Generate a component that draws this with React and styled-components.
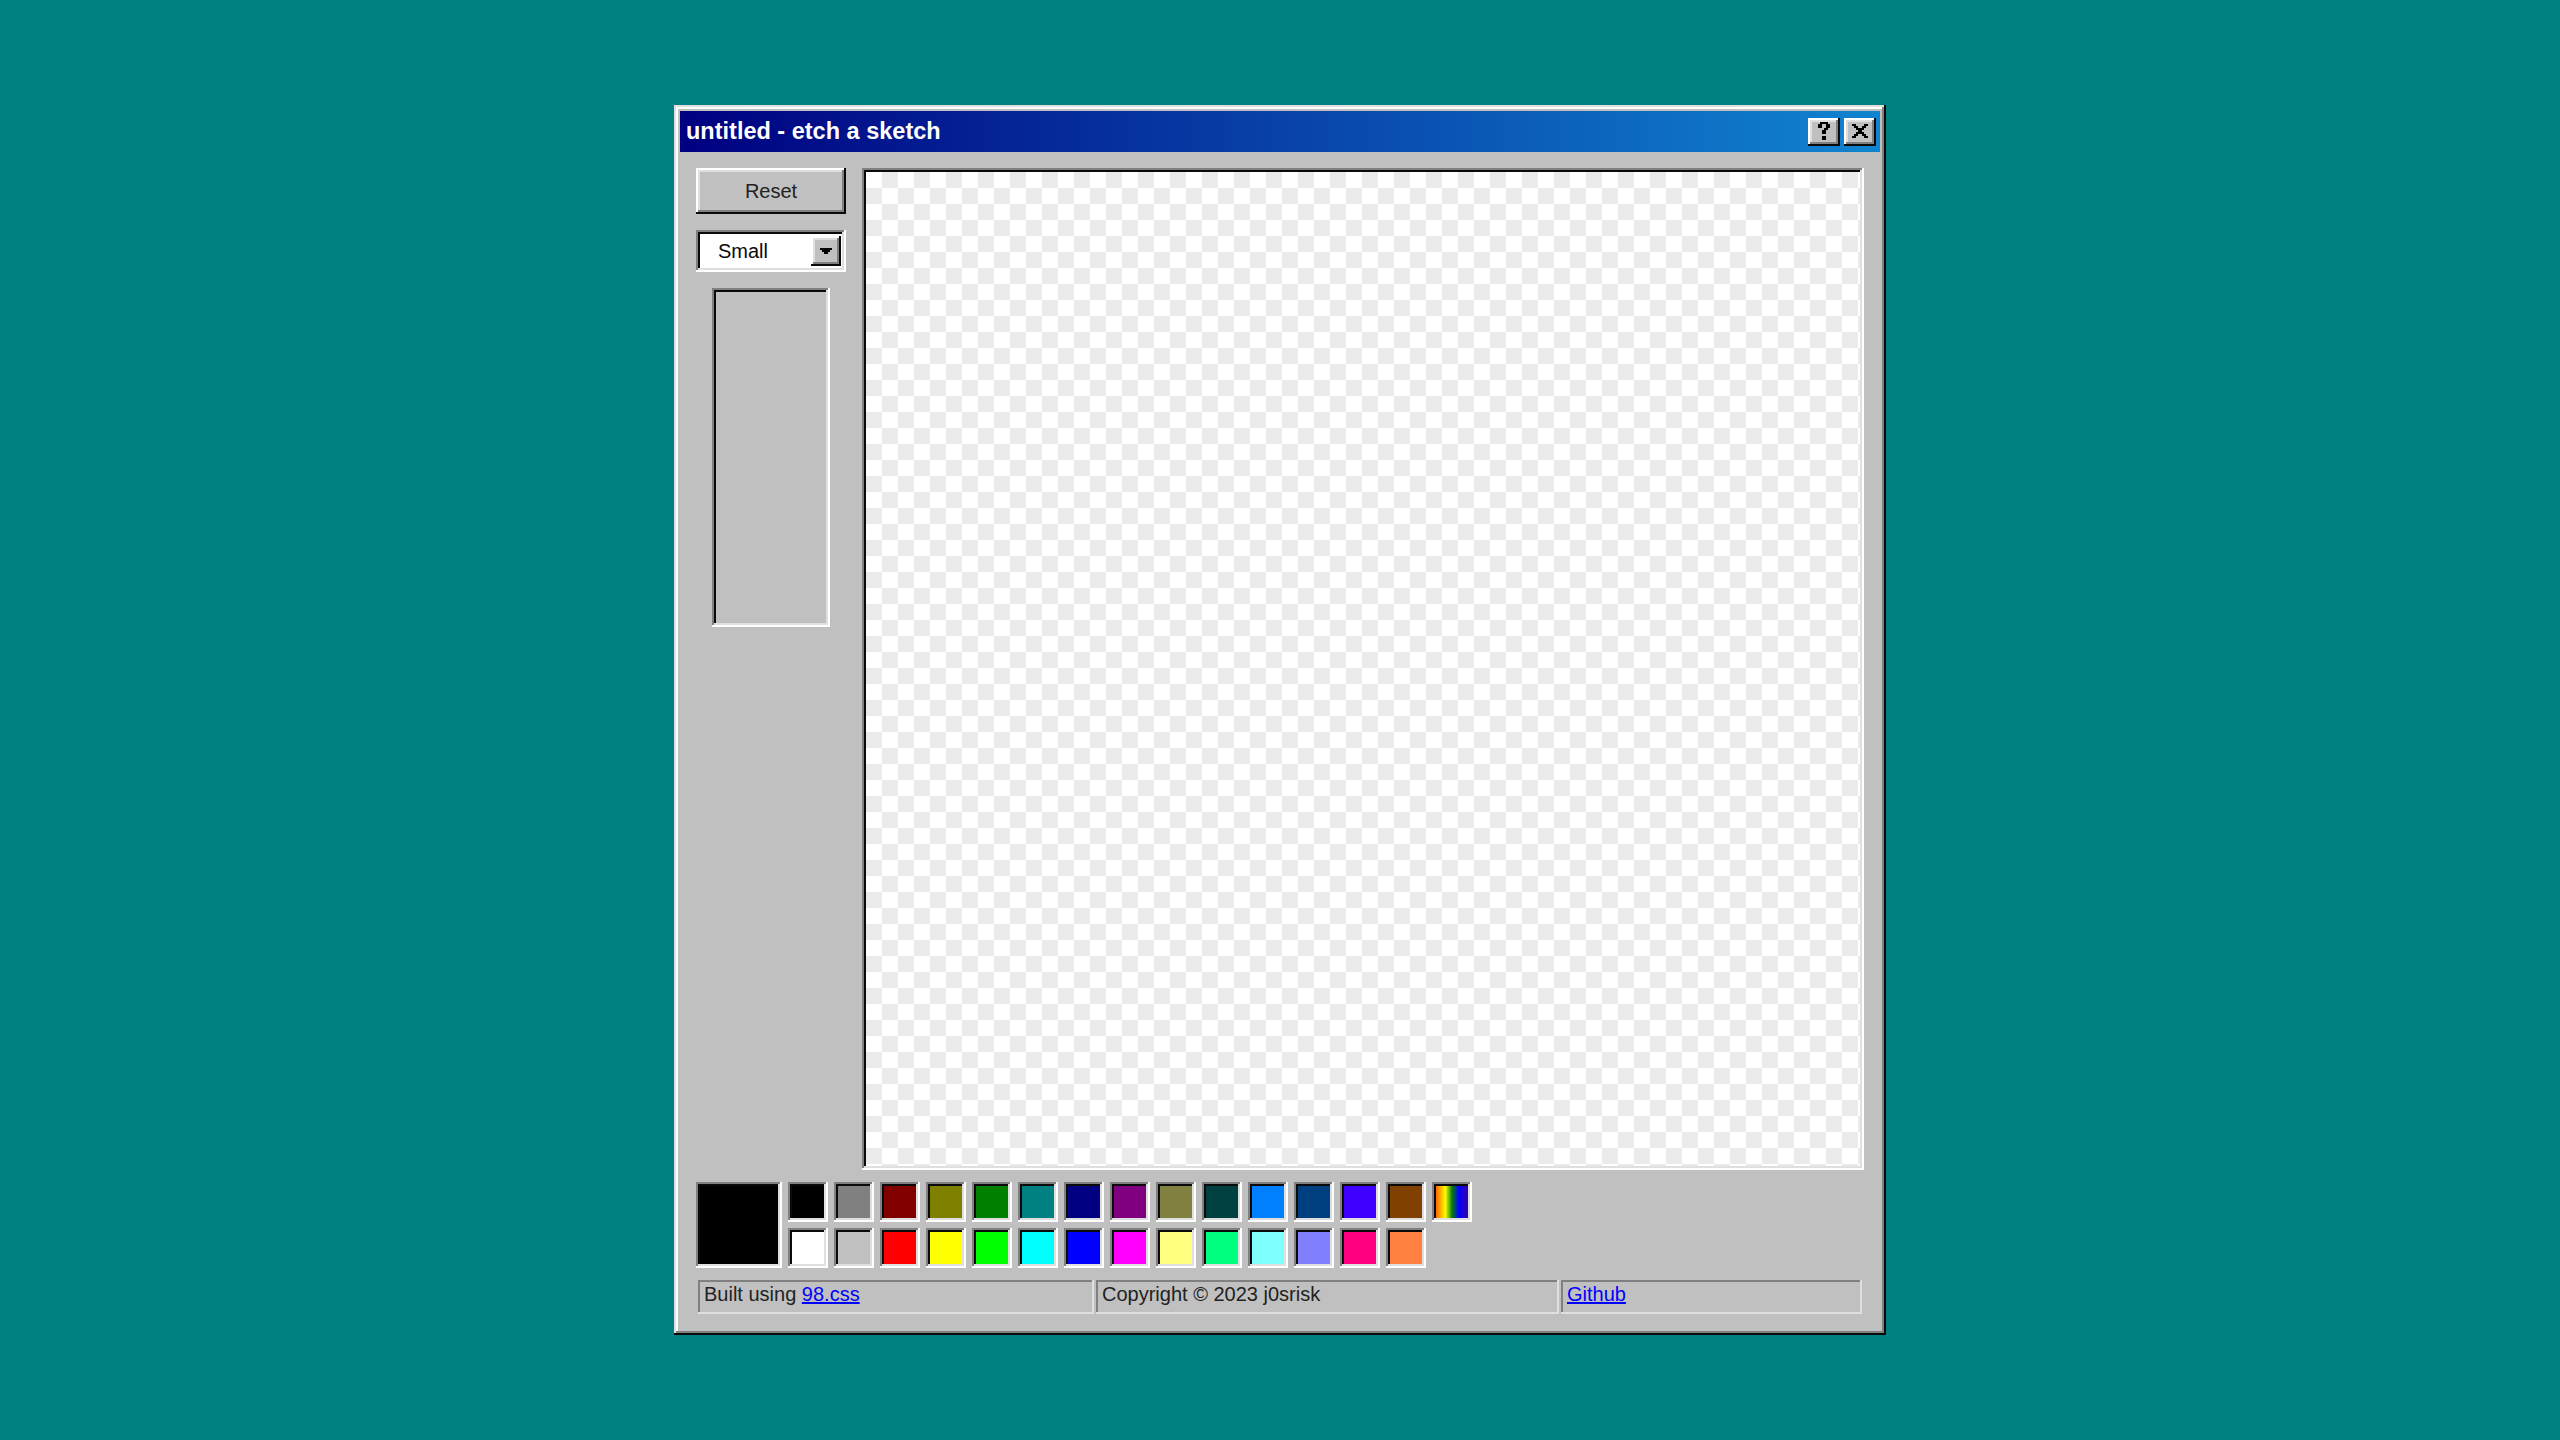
import React from 'react';
import styled, { createGlobalStyle } from 'styled-components';

const GlobalStyle = createGlobalStyle`
  html, body {
    margin: 0;
    padding: 0;
    background: #008080;
  }
  body {
    font-family: "Liberation Sans", Arial, sans-serif;
    color: #222;
  }
  * {
    box-sizing: border-box;
  }
`;

const raised = `
  box-shadow: inset -2px -2px #0a0a0a, inset 2px 2px #fff,
    inset -4px -4px #808080, inset 4px 4px #dfdfdf;
`;

const sunken = `
  box-shadow: inset -2px -2px #fff, inset 2px 2px #808080,
    inset -4px -4px #dfdfdf, inset 4px 4px #0a0a0a;
`;

const Desktop = styled.div`
  min-height: 100vh;
  display: flex;
  align-items: center;
  justify-content: center;
`;

const Window = styled.div`
  width: 1212px;
  padding: 6px;
  background: #c0c0c0;
  box-shadow: inset -2px -2px #0a0a0a, inset 2px 2px #dfdfdf,
    inset -4px -4px #808080, inset 4px 4px #fff;
`;

const TitleBar = styled.div`
  height: 41px;
  padding: 0 4px 0 6px;
  display: flex;
  align-items: center;
  justify-content: space-between;
  background: linear-gradient(90deg, #000080, #1084d0);
`;

const TitleText = styled.div`
  color: #fff;
  font-weight: bold;
  font-size: 23.5px;
  letter-spacing: 0;
`;

const Controls = styled.div`
  display: flex;
  gap: 4px;
`;

const ControlButton = styled.button`
  width: 32px;
  height: 28px;
  padding: ${({ $top }) => $top}px 0 0;
  border: none;
  background: #c0c0c0;
  display: flex;
  justify-content: center;
  align-items: flex-start;
  ${raised}
`;

const Body = styled.div`
  margin: 16px 16px 15px;
  display: flex;
  flex-direction: column;
`;

const Main = styled.div`
  display: flex;
  gap: 16px;
`;

const Sidebar = styled.div`
  width: 150px;
  display: flex;
  flex-direction: column;
  align-items: center;
  gap: 16px;
`;

const Button = styled.button`
  width: 150px;
  height: 46px;
  border: none;
  background: #c0c0c0;
  color: #222;
  font-family: inherit;
  font-size: 20px;
  padding: 0;
  ${raised}
`;

const Select = styled.div`
  width: 150px;
  height: 42px;
  padding: 6px 5px 6px 22px;
  display: flex;
  align-items: center;
  background: #fff;
  ${sunken}
`;

const SelectText = styled.span`
  flex: 1;
  font-size: 20px;
  color: #0a0a0a;
`;

const ArrowButton = styled.div`
  width: 30px;
  height: 30px;
  display: flex;
  align-items: center;
  justify-content: center;
  background: #c0c0c0;
  ${raised}
`;

const Preview = styled.div`
  width: 118px;
  height: 339px;
  background: #c0c0c0;
  ${sunken}
`;

const Canvas = styled.div`
  width: 1002px;
  height: 1002px;
  background: repeating-conic-gradient(#ebebeb 0% 25%, #fff 0% 50%) 4px 4px / 32px 32px;
  ${sunken}
`;

const Palette = styled.div`
  margin-top: 12px;
  display: flex;
  gap: 6px;
`;

const CurrentColor = styled.div`
  width: 86px;
  height: 86px;
  background: ${({ $color }) => $color};
  ${sunken}
`;

const SwatchGrid = styled.div`
  display: grid;
  grid-template-columns: repeat(15, 40px);
  grid-auto-rows: 40px;
  gap: 6px;
`;

const Swatch = styled.div`
  background: ${({ $color }) => $color};
  ${sunken}
`;

const StatusBar = styled.div`
  margin: 12px 2px 0;
  display: flex;
  gap: 2px;
`;

const StatusField = styled.div`
  flex: 0 0 ${({ $width }) => $width}px;
  height: 34px;
  padding: 0 6px;
  font-size: 20px;
  line-height: 28px;
  color: #222;
  white-space: nowrap;
  box-shadow: inset -2px -2px #dfdfdf, inset 2px 2px #808080;
`;

const Link = styled.a`
  color: #0000ff;
  text-decoration: underline;
`;

const HelpIcon = () => (
  <svg width="12" height="18" viewBox="0 0 6 9" shapeRendering="crispEdges">
    <path fill="#000" d="M0 1h2v2H0zM1 0h4v1H1zM4 1h2v2H4zM3 3h2v1H3zM2 4h2v2H2zM2 7h2v2H2z" />
  </svg>
);

const CloseIcon = () => (
  <svg width="16" height="14" viewBox="0 0 8 7" shapeRendering="crispEdges">
    <path
      fill="#000"
      fillRule="evenodd"
      d="M0 0h2v1h1v1h2V1h1V0h2v1H7v1H6v1H5v1h1v1h1v1h1v1H6V6H5V5H3v1H2v1H0V6h1V5h1V4h1V3H2V2H1V1H0V0z"
    />
  </svg>
);

const DownArrow = () => (
  <svg width="12" height="6" viewBox="0 0 12 6" shapeRendering="crispEdges">
    <path fill="#000" d="M0 0h12v2h-2v2h-2v2H4V4H2V2H0z" />
  </svg>
);

const topColors = [
  '#000000', '#808080', '#800000', '#808000', '#008000', '#008080', '#000080', '#800080',
  '#808040', '#004040', '#0080ff', '#004080', '#4000ff', '#804000',
  'linear-gradient(90deg, #ff2000, #ff9000, #ffff00, #008000, #0000ff, #2a00c0, #4b0082)',
];

const bottomColors = [
  '#ffffff', '#c0c0c0', '#ff0000', '#ffff00', '#00ff00', '#00ffff', '#0000ff', '#ff00ff',
  '#ffff80', '#00ff80', '#80ffff', '#8080ff', '#ff0080', '#ff8040',
];

export default function App() {
  return (
    <>
      <GlobalStyle />
      <Desktop>
        <Window>
          <TitleBar>
            <TitleText>untitled - etch a sketch</TitleText>
            <Controls>
              <ControlButton aria-label="Help" $top={4}>
                <HelpIcon />
              </ControlButton>
              <ControlButton aria-label="Close" $top={6}>
                <CloseIcon />
              </ControlButton>
            </Controls>
          </TitleBar>
          <Body>
            <Main>
              <Sidebar>
                <Button>Reset</Button>
                <Select>
                  <SelectText>Small</SelectText>
                  <ArrowButton>
                    <DownArrow />
                  </ArrowButton>
                </Select>
                <Preview />
              </Sidebar>
              <Canvas />
            </Main>
            <Palette>
              <CurrentColor $color="#000000" />
              <SwatchGrid>
                {topColors.map((c, i) => (
                  <Swatch key={'t' + i} $color={c} />
                ))}
                {bottomColors.map((c, i) => (
                  <Swatch key={'b' + i} $color={c} />
                ))}
              </SwatchGrid>
            </Palette>
            <StatusBar>
              <StatusField $width={396}>
                Built using <Link href="#">98.css</Link>
              </StatusField>
              <StatusField $width={463}>Copyright © 2023 j0srisk</StatusField>
              <StatusField $width={301}>
                <Link href="#">Github</Link>
              </StatusField>
            </StatusBar>
          </Body>
        </Window>
      </Desktop>
    </>
  );
}
